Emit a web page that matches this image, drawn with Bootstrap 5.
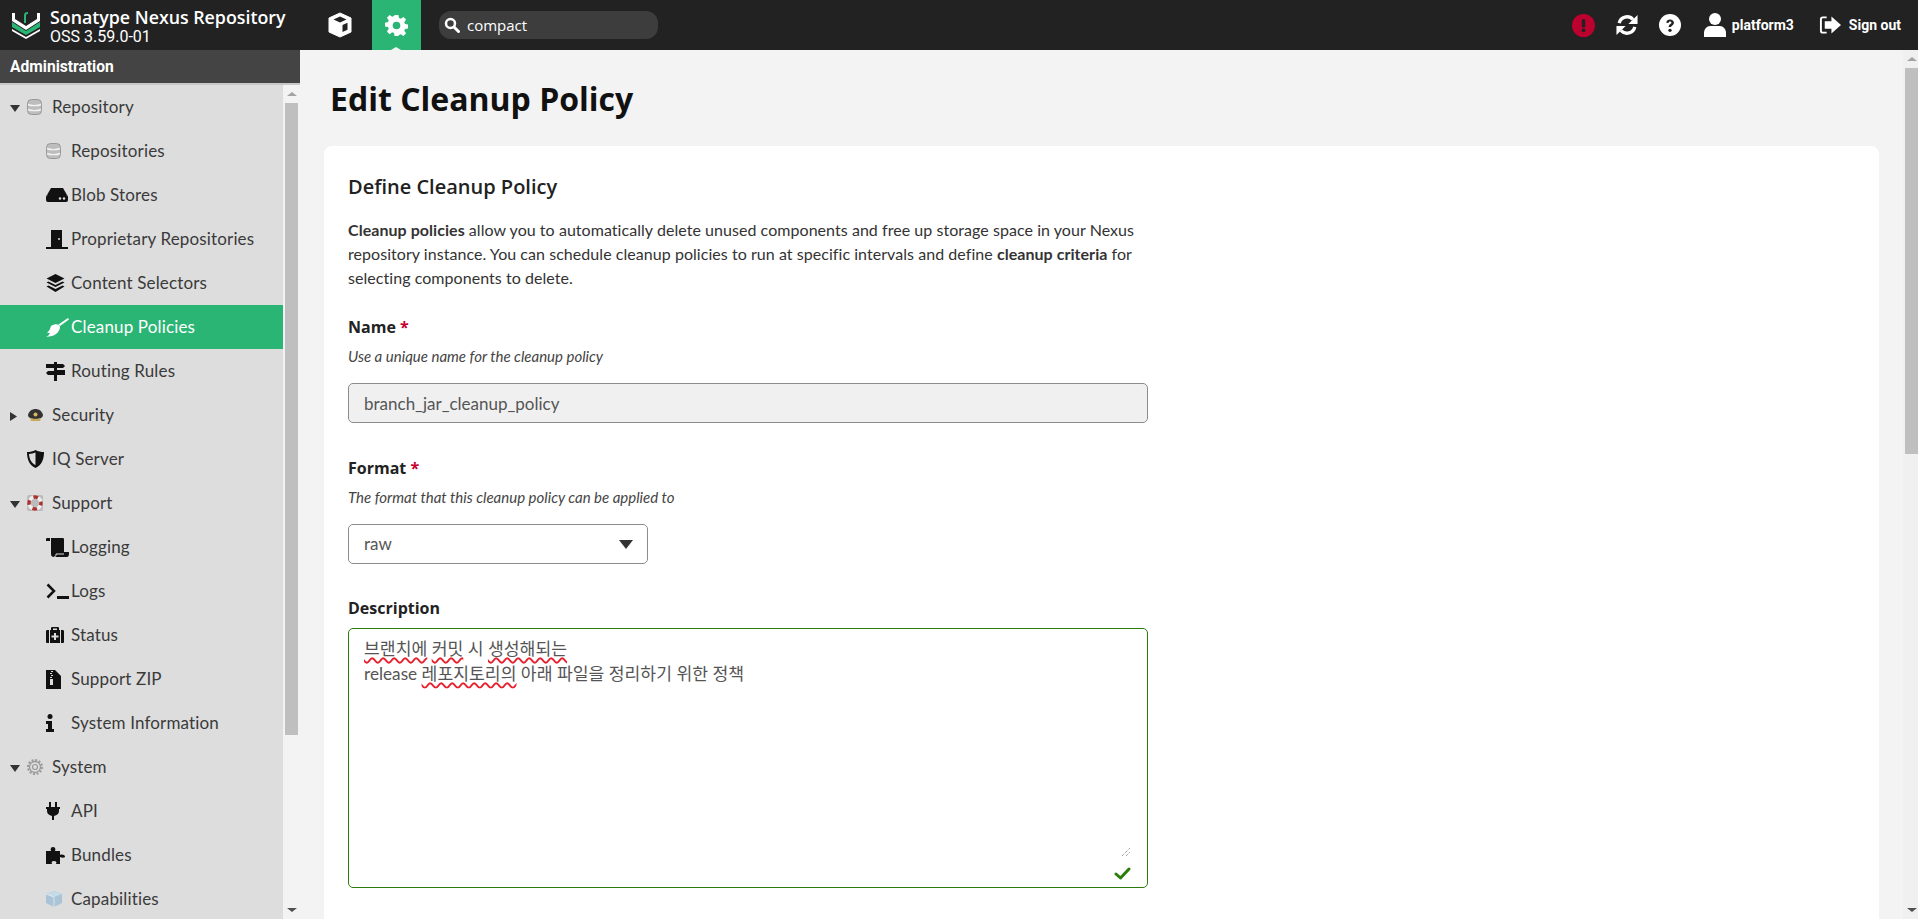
<!DOCTYPE html>
<html lang="en">
<head>
  <meta charset="UTF-8">
  <title>Edit Cleanup Policy</title>
  <link href="https://cdn.jsdelivr.net/npm/bootstrap@5.3.0/dist/css/bootstrap.min.css" rel="stylesheet">
  <style>
    html, body { height: 100%; overflow: hidden; }
    body { font-family: Lato, "Noto Sans CJK KR", sans-serif; font-size: 16px; color: #333; background: #f3f3f3; }

    .top-bar { height: 50px; background: #222; color: #fff; }
    .brand-logo { width: 28px; height: 28px; margin-left: 12px; margin-right: 10px; flex: none; }
    .brand-text { width: 265px; flex: none; font-family: "Open Sans", sans-serif; }
    .brand-name { font-size: 17.8px; font-weight: 600; line-height: 21px; margin-top: 2px; }
    .brand-ver { font-family: Roboto, sans-serif; font-size: 16px; line-height: 17px; }
    .mode-btn { width: 49px; height: 50px; flex: none; }
    .mode-btn.on { background: #2ab575; position: relative; margin-left: 8px; }
    .mode-btn.on::after { content: ""; position: absolute; left: 19px; bottom: 0; border: 5px solid transparent; border-bottom: 3px solid #f3f3f3; border-top: 0; }
    .search-pill { width: 219px; height: 28px; margin-left: 18px; border-radius: 12px; background: #3d3d3d; padding-left: 5px; gap: 7px; font-family: "Open Sans", sans-serif; font-size: 15px; flex: none; }
    .top-right { font-family: Roboto, sans-serif; font-size: 14px; font-weight: 700; margin-right: 17px; }
    .gap-icon { margin-left: 21px; }
    .user-icon { margin-left: 23px; }
    .user-name { margin-left: 6px; margin-right: 25px; }

    .work-area { height: 869px; }
    .side-pane { width: 300px; flex: none; background: #f3f3f3; overflow: hidden; }
    .side-head { height: 35px; background: #444; color: #fff; padding: 2px 0 0 10px; font-family: Roboto, sans-serif; font-weight: 700; font-size: 15.6px; border-bottom: 2px solid #c8c8c8; }
    .side-body { height: 834px; }
    .side-list { width: 283px; flex: none; background: #ddd; }
    .side-row { height: 44px; color: #3a3a3a; font-size: 17px; letter-spacing: .15px; padding-left: 10px; }
    .side-row.child { padding-left: 46px; }
    .side-row.on { background: #2ab575; color: #fff; }
    .side-row .arrow { width: 17px; flex: none; }
    .side-row .ico { width: 25px; flex: none; display: flex; }
    .side-row.plain { padding-left: 27px; }

    .fake-bar { background: #f3f3f3; flex: none; }
    .side-bar { width: 17px; padding-left: 2px; padding-right: 2px; }
    .main-bar { width: 15px; padding-left: 2px; background: #f0f0f0; }
    .bar-btn { height: 18px; flex: none; position: relative; }
    .bar-btn::after { content: ""; position: absolute; left: calc(50% - 5px); top: 7px; border: 5px solid transparent; }
    .bar-btn.up::after { border-bottom: 4px solid #a3a3a3; border-top: 0; }
    .bar-btn.down::after { border-top: 4px solid #505050; border-bottom: 0; }
    .bar-thumb { background: #bfbfbf; flex: none; }
    .side-bar .bar-thumb { height: 632px; }
    .main-bar .bar-thumb { height: 386px; }

    .main-pane { overflow: hidden; padding-left: 24px; }
    .page-title { font-family: "Open Sans", sans-serif; font-weight: 700; font-size: 32px; color: #111; margin: 29px 0 0 6px; line-height: 40px; }
    .form-panel { margin-top: 27px; width: 1555px; min-height: 900px; border-radius: 8px; background: #fff; padding: 24px; border: 0; }
    .form-panel h2 { font-family: "Open Sans", sans-serif; font-weight: 600; font-size: 20px; color: #222; line-height: 34px; margin: 0 0 14px; }
    .intro-text { width: 800px; font-size: 16px; letter-spacing: .05px; line-height: 24px; color: #333; margin-bottom: 25px; }
    .field-label { font-family: "Open Sans", sans-serif; font-weight: 700; font-size: 16px; line-height: 24px; color: #222; margin: 0; display: block; }
    .field-label span { color: #c4002e; }
    .field-help { font-size: 15px; font-style: italic; color: #444; line-height: 18px; margin-top: 8px; margin-bottom: 18px; }
    .field-box { width: 800px; height: 40px; border: 1px solid #8c8c8c; border-radius: 5px; font-family: Lato, "Noto Sans CJK KR", sans-serif; font-size: 17px; color: #555; padding: 0 15px; box-shadow: none; }
    .field-box:disabled { background: #f0f0f0; color: #555; }
    .name-box { margin-bottom: 33px; }
    .format-pick { width: 300px; background-color: #fff; padding-right: 40px; background-image: linear-gradient(#fff, #fff); }
    .pick-caret { width: 300px; margin-bottom: 32px; }
    .pick-caret::after { content: ""; position: absolute; right: 15px; top: 16px; border: 7.5px solid transparent; border-top: 9px solid #333; border-bottom: 0; pointer-events: none; }
    .desc-box { width: 800px; height: 260px; margin-top: 8px; border: 1.5px solid #2a7d0a; border-radius: 5px; padding: 8px 15px; font-family: Lato, "Noto Sans CJK KR", sans-serif; font-size: 17.2px; line-height: 24.5px; color: #555; }
    .spell-err { text-decoration: underline wavy #e8202c 1.5px; text-underline-offset: 2px; }
    .desc-grip { position: absolute; right: 16px; bottom: 31px; }
    .desc-ok { position: absolute; right: 16px; bottom: 7px; }
  </style>
</head>
<body>
  <header class="top-bar d-flex align-items-center">
    <svg class="brand-logo" viewBox="0 0 28 28">
      <path d="M0 2h3v6l11 7 11-7V2h3v8L14 19 0 10z" fill="#fff"/>
      <path d="M0 11l14 9 14-9v5l-14 8-14-8z" fill="#2ab575"/>
      <path d="M0 18l14 8 14-8v2l-14 8-14-8z" fill="#fff"/>
      <path d="M12 12V4.500C12 2 13 1 16 1v2c-1.500 0-2 .5-2 2v7z" fill="#2ab575"/>
    </svg>
    <div class="brand-text">
      <div class="brand-name">Sonatype Nexus Repository</div>
      <div class="brand-ver">OSS 3.59.0-01</div>
    </div>
    <div class="mode-btn d-flex align-items-center justify-content-center">
      <svg width="26" height="26" viewBox="0 0 26 26"><path d="M13 1l11 5v14l-11 5-11-5V6z" fill="#fff" stroke="#fff" stroke-linejoin="round"/><path d="M13 4.500L19.500 7.500 13 10.500 6.500 7.500z" fill="#222"/><path d="M15.500 13l5-2.300v7l-5 2.300z" fill="#222"/></svg>
    </div>
    <div class="mode-btn on d-flex align-items-center justify-content-center">
      <svg width="23" height="23" viewBox="0 0 24 24"><path fill="#fff" fill-rule="evenodd" d="M10 1h4l.6 3.100 1.900.8L19.200 3 22 5.800l-1.900 2.700.8 1.900 3.100.6v4l-3.100.6-.8 1.900 1.900 2.700-2.800 2.800-2.700-1.900-1.900.8L14 23h-4l-.6-3.100-1.900-.8L4.800 21 2 18.200l1.900-2.700-.8-1.900L0 13v-4l3.100-.6.800-1.900L2 3.800 4.800 1l2.700 1.900 1.900-.8zM12 8a4 4 0 100 8 4 4 0 000-8z"/></svg>
    </div>
    <div class="search-pill d-flex align-items-center">
      <svg width="16" height="16" viewBox="0 0 16 16"><circle cx="6.500" cy="6.500" r="4.500" fill="none" stroke="#fff" stroke-width="2.500"/><path d="M10 10l4.500 4.500" stroke="#fff" stroke-width="3" stroke-linecap="round"/></svg>
      <span>compact</span>
    </div>
    <div class="top-right ms-auto d-flex align-items-center">
      <svg width="23" height="23" viewBox="0 0 24 24"><circle cx="12" cy="12" r="12" fill="#bc012f"/><rect x="10.300" y="5.500" width="3.400" height="8.500" rx="1" fill="#222"/><circle cx="12" cy="17" r="2" fill="#222"/></svg>
      <svg class="gap-icon" width="22" height="22" viewBox="0 0 24 24"><path fill="none" stroke="#fff" stroke-width="3.600" d="M3.500 10A8.700 8.700 0 0118.500 6M20.500 14A8.700 8.700 0 015.500 18"/><path fill="#fff" d="M23.500 1v10h-10zM.5 23V13h10z"/></svg>
      <svg class="gap-icon" width="22" height="22" viewBox="0 0 24 24"><circle cx="12" cy="12" r="12" fill="#fff"/><path d="M8 9.500C8 7 10 6 12 6c2.500 0 4.300 1.400 4.300 3.500 0 2.800-3 2.900-3 4.700h-2.800c0-3 3-3.300 3-4.700 0-.8-.7-1.200-1.500-1.200-1 0-1.400.6-1.600 1.500z" fill="#222"/><circle cx="12" cy="17.800" r="1.800" fill="#222"/></svg>
      <svg class="user-icon" width="22" height="24" viewBox="0 0 22 24"><circle cx="11" cy="6" r="6" fill="#fff"/><path d="M0 24v-4c0-4 3-7 6-7h10c3 0 6 3 6 7v4z" fill="#fff"/></svg>
      <span class="user-name">platform3</span>
      <svg width="22" height="20" viewBox="0 0 23 20"><path d="M8 2H4C2.500 2 2 3 2 4v12c0 1 .5 2 2 2h4" fill="none" stroke="#fff" stroke-width="2"/><path d="M13 1l10 9-10 9v-5H6V6h7z" fill="#fff"/></svg>
      <span class="ms-2">Sign out</span>
    </div>
  </header>

  <div class="work-area d-flex">
    <aside class="side-pane">
      <div class="side-head d-flex align-items-center">Administration</div>
      <div class="side-body d-flex">
        <div class="side-list" id="sideList"></div>
        <div class="fake-bar side-bar d-flex flex-column">
          <div class="bar-btn up"></div>
          <div class="bar-thumb"></div>
          <div class="flex-grow-1"></div>
          <div class="bar-btn down"></div>
        </div>
      </div>
    </aside>
    <main class="main-pane flex-grow-1">
      <h1 class="page-title">Edit Cleanup Policy</h1>
      <form class="form-panel card">
        <h2>Define Cleanup Policy</h2>
        <p class="intro-text"><b>Cleanup policies</b> allow you to automatically delete unused components and free up storage space in your Nexus repository instance. You can schedule cleanup policies to run at specific intervals and define <b>cleanup criteria</b> for selecting components to delete.</p>

        <label class="field-label">Name <span>*</span></label>
        <div class="field-help">Use a unique name for the cleanup policy</div>
        <input class="form-control field-box name-box" type="text" value="branch_jar_cleanup_policy" disabled>

        <label class="field-label">Format <span>*</span></label>
        <div class="field-help">The format that this cleanup policy can be applied to</div>
        <div class="pick-caret position-relative">
          <select class="form-select field-box format-pick"><option>raw</option></select>
        </div>

        <label class="field-label">Description</label>
        <div class="position-relative desc-box">
          <div><span class="spell-err">브랜치에</span> <span class="spell-err">커밋</span> 시 <span class="spell-err">생성해되는</span></div>
          <div>release <span class="spell-err">레포지토리의</span> 아래 파일을 정리하기 위한 정책</div>
          <svg class="desc-grip" width="9" height="8" viewBox="0 0 9 8"><path d="M0 8l8-8M4 8l4-4" stroke="#777" stroke-width="1" stroke-dasharray="1 1"/></svg>
          <svg class="desc-ok" width="17" height="13" viewBox="0 0 17 13"><path d="M2 7l4.500 4L15 2" fill="none" stroke="#2a7d0a" stroke-width="3" stroke-linecap="round" stroke-linejoin="round"/></svg>
        </div>
      </form>
    </main>
    <div class="fake-bar main-bar d-flex flex-column">
      <div class="bar-btn up"></div>
      <div class="bar-thumb"></div>
      <div class="flex-grow-1"></div>
      <div class="bar-btn down"></div>
    </div>
  </div>

  <script src="https://cdn.jsdelivr.net/npm/bootstrap@5.3.0/dist/js/bootstrap.bundle.min.js"></script>
  <script>
    const db = '<svg width="15" height="16" viewBox="0 0 15 16"><rect x=".5" y=".5" width="14" height="15" rx="4" fill="#bdbdbd" stroke="#999"/><path d="M1 5.500c3 1.500 10 1.500 13 0M1 10.500c3 1.500 10 1.500 13 0" fill="none" stroke="#f2f2f2" stroke-width="1.400"/></svg>';
    const k = '#111';
    const icons = {
      db,
      blob: `<svg width="22" height="16" viewBox="0 0 22 16"><path d="M5 1h12l4 7H1z" fill="${k}"/><rect x="0" y="8" width="22" height="7" rx="2" fill="${k}"/><circle cx="14" cy="11.500" r="1.200" fill="#ddd"/><circle cx="18" cy="11.500" r="1.200" fill="#ddd"/></svg>`,
      door: `<svg width="23" height="19" viewBox="0 0 23 19"><path d="M5 0h11v17h6v2H0v-2h5z" fill="${k}"/><circle cx="13" cy="9" r="1" fill="#ddd"/></svg>`,
      layers: `<svg width="19" height="18" viewBox="0 0 19 18"><path d="M9.500 0l9 4.500-9 4.500-9-4.500zM2.500 7.500l7 3.500 7-3.500 2 1-9 4.500-9-4.500zM2.500 11.500l7 3.500 7-3.500 2 1L9.500 18l-9-5.500z" fill="${k}"/></svg>`,
      broom: `<svg width="23" height="19" viewBox="0 0 23 19"><path d="M22 0l1 1.500-9 6.500-1.500-1.500z" fill="#fff"/><path d="M5 8c3-2 6-2 8-1l1 2c0 4-4 8-8 9l-6 1c2-1 3-2 4-4-1 0-2 0-3-.5 2-1 3-3 4-6.500z" fill="#fff"/></svg>`,
      signs: `<svg width="19" height="19" viewBox="0 0 19 19"><path d="M8 0h3v2h6l2 2-2 2h-6v2h8v5H11v6H8v-6H2l-2-2 2-2h6V6H0V2h8z" fill="${k}"/></svg>`,
      cap: `<svg width="17" height="13" viewBox="0 0 17 13"><path d="M1 6C2 2 5 0 8.500 0S15 2 16 6c0 2-2 4-7.500 4S1 8 1 6z" fill="#333"/><path d="M3 9c2 1 9 1 11 0l-1 3H4z" fill="#c9a95a"/><circle cx="8.500" cy="5.500" r="2" fill="#d8b85c"/></svg>`,
      shield: `<svg width="17" height="18" viewBox="0 0 17 18"><path d="M8.500 0C11 1.500 14 2 17 2c0 7-2 13-8.500 16C2 15 0 9 0 2c3 0 6-.5 8.500-2z" fill="${k}"/><path d="M8.500 2.500V15C4 13 2.300 8.500 2 4c2.500-.2 4.500-.6 6.500-1.500z" fill="#ddd"/></svg>`,
      ring: `<svg width="16" height="16" viewBox="0 0 16 16"><rect width="16" height="16" rx="2" fill="#bbb"/><circle cx="8" cy="8" r="6" fill="none" stroke="#eee" stroke-width="3.500"/><circle cx="8" cy="8" r="6" fill="none" stroke="#a33" stroke-width="3.500" stroke-dasharray="4.700 4.700" stroke-dashoffset="2.300"/></svg>`,
      scroll: `<svg width="23" height="19" viewBox="0 0 23 19"><path d="M0 1c0-1 1-1 1-1h3v3H0zM5 0h12c1 0 1 1 1 2v12h5v2c0 2-1 3-2 3H8c-2 0-3-1-3-3z" fill="${k}"/><path d="M8 19c2 0 2-2 2-3h8" fill="none" stroke="#ddd" stroke-width="1"/></svg>`,
      term: `<svg width="23" height="16" viewBox="0 0 23 16"><path d="M1.500 1.500L8 8l-6.500 6.500" fill="none" stroke="${k}" stroke-width="2.500"/><rect x="11" y="13" width="12" height="3" fill="${k}"/></svg>`,
      kit: `<svg width="18" height="16" viewBox="0 0 18 16"><path d="M0 4c0-1 1-1 2-1h1v13H2c-1 0-2 0-2-1zM4 3h1V1c0-1 1-1 1-1h6c1 0 1 1 1 1v2h1v13H4zM7 1.500V3h4V1.500zM15 3h1c1 0 2 0 2 1v11c0 1-1 1-2 1h-1z" fill="${k}"/><path d="M8 6h2v2.500h2.500v2H10V13H8v-2.500H5.500v-2H8z" fill="#ddd"/></svg>`,
      zip: `<svg width="15" height="19" viewBox="0 0 15 19"><path d="M0 0h9l6 6v13H0z" fill="${k}"/><path d="M5 1h2v1H5zM4 3h2v1H4zM5 5h2v1H5zM4 7h2v1H4zM4 9h3v6H4z" fill="#ddd"/></svg>`,
      info: `<svg width="8" height="18" viewBox="0 0 8 18"><circle cx="4" cy="2.500" r="2.500" fill="${k}"/><path d="M0 7h6v8h2v3H0v-3h2v-5H0z" fill="${k}"/></svg>`,
      gear: `<svg width="16" height="16" viewBox="0 0 16 16"><circle cx="8" cy="8" r="5.500" fill="none" stroke="#999" stroke-width="1.300"/><circle cx="8" cy="8" r="2.500" fill="none" stroke="#999" stroke-width="1.200"/><circle cx="8" cy="8" r="7" fill="none" stroke="#999" stroke-width="2" stroke-dasharray="2 1.660"/></svg>`,
      plug: `<svg width="14" height="18" viewBox="0 0 14 18"><path d="M3 0h2v5H3zM9 0h2v5H9zM0 5h14v2h-1v2c0 3-2 4-5 5v4H6v-4c-3-1-5-2-5-5V7H0z" fill="${k}"/></svg>`,
      puzzle: `<svg width="21" height="18" viewBox="0 0 21 18"><path d="M0 5h5c-1-2 0-4 2-4s3 2 2 4h5v4c2-1 5 0 5 1.500S16 12 14 11v7h-4c1-2 0-3-2-3s-3 1-2 3H0z" fill="${k}"/></svg>`,
      cube: `<svg width="16" height="16" viewBox="0 0 16 16"><path d="M8 0l8 3v9l-8 4-8-4V3z" fill="#a9c4d6"/><path d="M8 6l8-3-8-3-8 3z" fill="#c6dbe8"/><path d="M0 3l8 3v10" fill="none" stroke="#eee" stroke-width=".8"/></svg>`
    };

    const rows = [
      ['open', 'db', 'Repository'],
      ['child', 'db', 'Repositories'],
      ['child', 'blob', 'Blob Stores'],
      ['child', 'door', 'Proprietary Repositories'],
      ['child', 'layers', 'Content Selectors'],
      ['active', 'broom', 'Cleanup Policies'],
      ['child', 'signs', 'Routing Rules'],
      ['closed', 'cap', 'Security'],
      ['plain', 'shield', 'IQ Server'],
      ['open', 'ring', 'Support'],
      ['child', 'scroll', 'Logging'],
      ['child', 'term', 'Logs'],
      ['child', 'kit', 'Status'],
      ['child', 'zip', 'Support ZIP'],
      ['child', 'info', 'System Information'],
      ['open', 'gear', 'System'],
      ['child', 'plug', 'API'],
      ['child', 'puzzle', 'Bundles'],
      ['child', 'cube', 'Capabilities']
    ];

    const arrows = {
      open: '<svg width="10" height="7" viewBox="0 0 10 7"><path d="M0 0h10L5 7z" fill="#333"/></svg>',
      closed: '<svg width="7" height="9" viewBox="0 0 7 9"><path d="M0 0l7 4.500L0 9z" fill="#333"/></svg>'
    };

    document.getElementById('sideList').innerHTML = rows.map(([kind, icon, label]) => {
      if (kind === 'child' || kind === 'active') {
        return `<div class="side-row child d-flex align-items-center ${kind === 'active' ? 'on' : ''}"><span class="ico">${icons[icon]}</span><span>${label}</span></div>`;
      }
      if (kind === 'plain') {
        return `<div class="side-row plain d-flex align-items-center"><span class="ico">${icons[icon]}</span><span>${label}</span></div>`;
      }
      return `<div class="side-row d-flex align-items-center"><span class="arrow">${arrows[kind]}</span><span class="ico">${icons[icon]}</span><span>${label}</span></div>`;
    }).join('');
  </script>
</body>
</html>
